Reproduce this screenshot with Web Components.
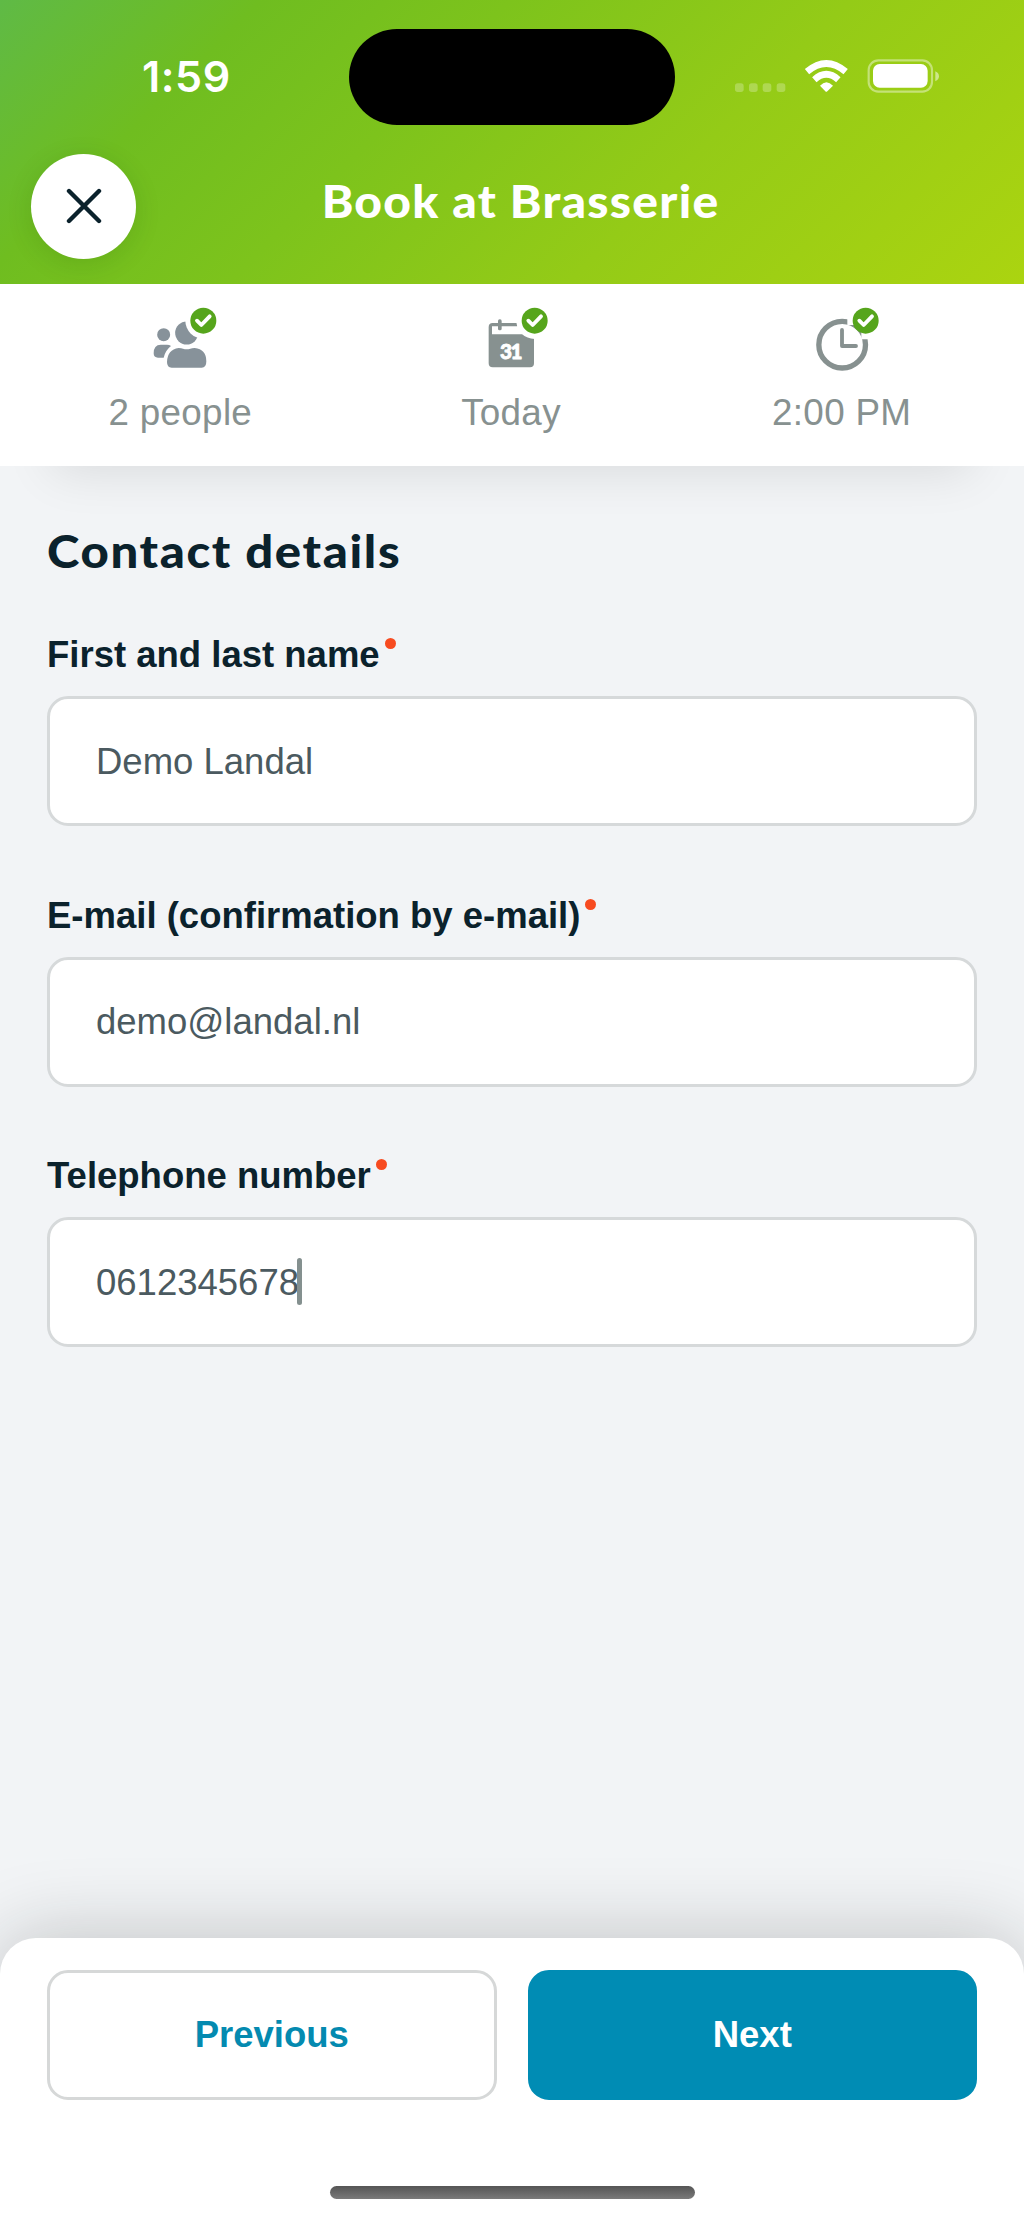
<!DOCTYPE html>
<html lang="en">
<head>
<meta charset="utf-8">
<title>Book at Brasserie</title>
<style>
html, body { margin: 0; padding: 0; }
body { width: 1024px; height: 2220px; overflow: hidden; background: #f2f4f6; font-family: "Liberation Sans", Arial, sans-serif; }
</style>
</head>
<body>
<booking-screen></booking-screen>
<script>
const define = (name, markup, setup) => customElements.define(name, class extends HTMLElement {
  constructor() {
    super();
    this.attachShadow({ mode: 'open' }).innerHTML = markup;
  }
  connectedCallback() { if (setup) setup(this, this.shadowRoot); }
});

define('status-bar', `
<style>
:host { display: flex; height: 96px; padding-top: 29px; align-items: flex-start; color: #fff; }
.time { width: 349px; box-sizing: border-box; padding-left: 142px; font: 600 43px/52px Inter, sans-serif; margin-top: 21px; letter-spacing: 0.6px; }
.island { width: 326px; height: 96px; border-radius: 48px; background: #000; flex: none; }
.icons { display: flex; align-items: flex-end; margin: 30px 0 0 59px; height: 34px; }
svg { display: block; }
</style>
<div class="time">1:59</div>
<div class="island"></div>
<div class="icons">
<svg width="52" height="34" viewBox="666 177 156 102" fill="#fff" fill-opacity=".25"><rect x="669" y="250" width="26" height="26" rx="8"/><rect x="711" y="250" width="26" height="26" rx="8"/><rect x="752" y="250" width="26" height="26" rx="8"/><rect x="794" y="250" width="26" height="26" rx="8"/></svg>
<svg style="margin-left:18px" width="46" height="34" viewBox="876 177 138 102"><g fill="none" stroke="#fff" stroke-width="20"><path d="M885 215Q943 166 1001 215"/><path d="M907 239Q943 207 979 239"/></g><path d="M924 257Q943 236 963 257L946 274Q943 277 940 274Z" fill="#fff"/></svg>
<svg style="margin-left:17px" width="74" height="34" viewBox="1065 177 222 102"><rect x="1070" y="181" width="190" height="94" rx="29" fill="none" stroke="#fff" stroke-opacity=".42" stroke-width="6.500"/><rect x="1083" y="192" width="164" height="71" rx="20" fill="#fff"/><path d="M1270 214Q1281 219 1281 229T1270 244Z" fill="#fff" fill-opacity=".5"/></svg>
</div>`);

define('round-button', `
<style>
:host { display: flex; width: 105px; height: 105px; border-radius: 50%; background: #fff; align-items: center; justify-content: center; box-shadow: 0 5px 26px rgba(20,70,0,.14); }
</style>
<svg width="36" height="36" viewBox="0 0 36 36"><path d="M3 3 33 33M33 3 3 33" fill="none" stroke="#0b222c" stroke-width="4.400" stroke-linecap="round"/></svg>`);

define('page-header', `
<style>
:host { display: block; height: 284px; background: linear-gradient(135deg,#5fba46 0%,#6fbd20 20%,#7dc31c 39%,#94cb17 65%,#abd410 100%); }
.bar { display: grid; grid-template-columns: 136px 1fr 119px; padding: 28.500px 0 0 0; }
round-button { margin: 0 0 0 31px; }
h1 { margin: 17px 0 0; text-align: center; color: #fff; font: 900 45px/60px Lato, sans-serif; letter-spacing: 1.200px; white-space: nowrap; transform: scaleX(1.065); }
</style>
<status-bar></status-bar>
<div class="bar"><round-button></round-button><h1><slot></slot></h1></div>`);

const icons = {
  people: `<svg width="80" height="66" viewBox="152 44 240 198"><g fill="#87929a"><circle cx="223" cy="133" r="19.500"/><path d="M214 163H233Q240 163 245 167Q228 180 223 202H206Q193 202 193 189Q193 163 214 163Z"/><circle cx="292" cy="128" r="34.500"/><path d="M268 173Q276 173 281 175Q292 179 303 175Q308 173 316 173Q351 177 351 213Q351 232 337 232H247Q233 232 233 215Q234 178 268 173Z"/></g><circle cx="342" cy="91" r="54" fill="#fff"/><circle cx="342" cy="91" r="39" fill="#56a51c"/><path d="M323 91 336 104 361 78" fill="none" stroke="#fff" stroke-width="11.500" stroke-linecap="round" stroke-linejoin="round"/></svg>`,
  calendar: `<svg width="80" height="66" viewBox="1144 44 240 198"><g fill="#879190"><path d="M1209 98H1283V108H1207V132H1333V219Q1333 231 1321 231H1209Q1197 231 1197 219V110Q1197 98 1209 98Z"/><rect x="1225" y="87" width="11" height="33" rx="5"/></g><circle cx="1335" cy="91" r="55" fill="#fff"/><circle cx="1335" cy="91" r="39" fill="#56a51c"/><path d="M1316 91 1329 104 1354 78" fill="none" stroke="#fff" stroke-width="11.500" stroke-linecap="round" stroke-linejoin="round"/><text x="1265" y="205" fill="#fff" stroke="#fff" stroke-width="2.500" stroke-linejoin="round" text-anchor="middle" font-family="Lato, sans-serif" font-weight="900" font-size="62" textLength="68" lengthAdjust="spacing">31</text></svg>`,
  clock: `<svg width="80" height="66" viewBox="187 44 240 198"><circle cx="307.500" cy="163" r="70" fill="none" stroke="#879190" stroke-width="16"/><path d="M323 80H390V147H365V104H323Z" fill="#fff"/><path d="M307 119V167H349" fill="none" stroke="#879190" stroke-width="11.500" stroke-linecap="round" stroke-linejoin="round"/><circle cx="378" cy="91" r="39" fill="#56a51c"/><path d="M359 91 372 104 397 78" fill="none" stroke="#fff" stroke-width="11.500" stroke-linecap="round" stroke-linejoin="round"/></svg>`
};

define('step-tab', `
<style>
:host { display: flex; flex-direction: column; align-items: center; padding-top: 21px; color: #879190; font-size: 36.800px; line-height: 42px; letter-spacing: .3px; }
svg { display: block; }
.label { margin-top: 21px; }
</style>
<div class="icon"></div><div class="label"><slot></slot></div>`,
(el, root) => { root.querySelector('.icon').innerHTML = icons[el.getAttribute('icon')]; });

define('step-bar', `
<style>
:host { display: grid; grid-template-columns: repeat(3, 1fr); height: 182px; padding: 0 17px 0 15px; box-sizing: border-box; background: #fff; box-shadow: 0 57px 50px -52px rgba(0,0,0,.105); }
</style><slot></slot>`);

define('form-field', `
<style>
:host { display: flex; flex-direction: column; height: 260.600px; }
.label { display: flex; align-items: flex-start; height: 62px; color: #0b222c; font-weight: 700; font-size: 36.500px; line-height: 42px; white-space: nowrap; }
.label i { width: 11px; height: 11px; border-radius: 50%; background: #f74b20; margin: 4px 0 0 5px; }
.input { display: flex; align-items: center; height: 130px; box-sizing: border-box; border: 3px solid #d6d9da; border-radius: 21px; background: #fff; color: #4b5a60; padding: 1px 0 0 46px; font-size: 36.500px; line-height: 42px; }
.caret { display: none; width: 5px; height: 47px; border-radius: 2.500px; background: #84908f; margin: -2px 0 0 -2px; }
:host([focused]) .caret { display: block; }
</style>
<div class="label"><span class="name"></span><i></i></div>
<div class="input"><span><slot></slot></span><span class="caret"></span></div>`,
(el, root) => { root.querySelector('.name').textContent = el.getAttribute('label'); });

define('contact-form', `
<style>
:host { display: block; height: 1472px; box-sizing: border-box; padding: 55px 47px 0; }
h2 { margin: 0; height: 113px; color: #0b222c; font: 900 45px/60px Lato, sans-serif; letter-spacing: 1.500px; transform: scaleX(1.09); transform-origin: left; }
</style>
<h2>Contact details</h2><slot></slot>`);

define('action-button', `
<style>
:host { display: flex; flex: 1; height: 130px; box-sizing: border-box; border: 3px solid #d6d8d8; border-radius: 21px; align-items: center; justify-content: center; color: #048ab0; background: #fff; font-weight: 700; font-size: 36.500px; line-height: 42px; }
:host([primary]) { color: #fff; background: #008cb4; border-color: #008cb4; }
</style><slot></slot>`);

define('bottom-sheet', `
<style>
:host { display: flex; flex-direction: column; height: 282px; box-sizing: border-box; padding: 32px 47px 0; background: #fff; border-radius: 36px 36px 0 0; box-shadow: 0 0 80px rgba(20,25,25,.23); }
.row { display: flex; gap: 31px; }
.home { width: 365px; height: 13px; margin: 86px auto 0; border-radius: 6.500px; background: linear-gradient(#555,#7a7a7a); }
</style>
<div class="row"><slot></slot></div><div class="home"></div>`);

define('booking-screen', `
<style>:host { display: flex; flex-direction: column; width: 1024px; height: 2220px; background: #f2f4f6; }</style>
<page-header>Book at Brasserie</page-header>
<step-bar><step-tab icon="people">2 people</step-tab><step-tab icon="calendar">Today</step-tab><step-tab icon="clock">2:00 PM</step-tab></step-bar>
<contact-form>
<form-field label="First and last name">Demo Landal</form-field>
<form-field label="E-mail (confirmation by e-mail)">demo@landal.nl</form-field>
<form-field label="Telephone number" focused>0612345678</form-field>
</contact-form>
<bottom-sheet><action-button>Previous</action-button><action-button primary>Next</action-button></bottom-sheet>`);
</script>
</body>
</html>
